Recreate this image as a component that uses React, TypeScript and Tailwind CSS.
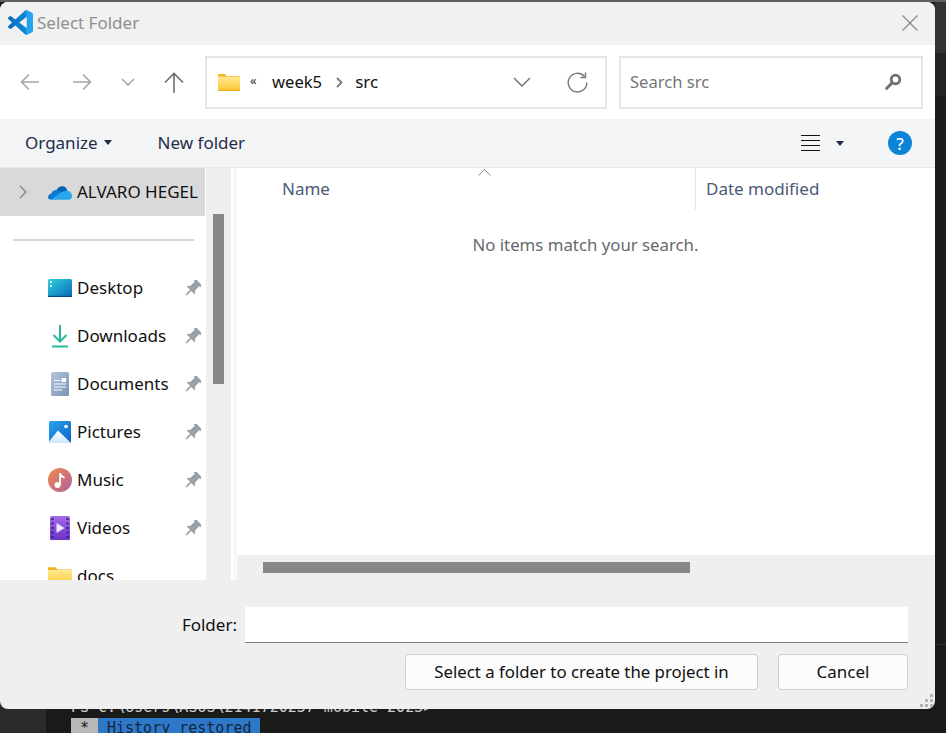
import type { ReactNode } from "react";

const pin = (
  <svg width="17" height="17" viewBox="0 0 16 16" fill="#98a1a9">
    <g transform="rotate(45 8 8)">
      <rect x="3.500" y="-0.500" width="9" height="2.400" rx="0.500" />
      <rect x="5" y="1.500" width="6" height="6.500" />
      <path d="M5 7.500h6l2.500 3h-11Z" />
      <rect x="7.200" y="10" width="1.600" height="6.500" />
    </g>
  </svg>
);

function FolderIcon({ w = 22, h = 18 }: { w?: number; h?: number }) {
  return (
    <svg width={w} height={h} viewBox="0 0 22 18">
      <defs>
        <linearGradient id="fold" x1="0" y1="0" x2="0" y2="1">
          <stop offset="0" stopColor="#ffe98f" />
          <stop offset="1" stopColor="#fcc93f" />
        </linearGradient>
      </defs>
      <path d="M0 2a1 1 0 0 1 1-1h6l2 2.500h-9Z" fill="#f5b51c" />
      <rect x="0" y="3" width="22" height="15" rx="1" fill="#f0ad14" />
      <rect x="0" y="3.500" width="22" height="13.200" fill="url(#fold)" />
    </svg>
  );
}

const CloudIcon = (
  <svg width="24" height="16" viewBox="0 0 24 16">
    <path d="M8.500 6.200C10 2.500 15 1 17.800 3.800 18.700 4.700 19.200 5.600 19.500 6.800L12 10.500Z" fill="#0364b8" />
    <path d="M9 6C6.500 5.500 3.800 7 3.500 9.500 1.300 10 0 11.500 0 13c0 1.700 1.300 2.800 3.500 2.800L14.500 8.500Z" fill="#0f78d4" />
    <path d="M19.500 6.800C22 7 24 9.500 24 12 24 14.500 22.500 15.800 20.500 15.800H3.500C9 12 13 6.800 19.500 6.800Z" fill="#28a8ea" />
  </svg>
);

const DesktopIcon = (
  <svg width="24" height="18" viewBox="0 0 24 18">
    <defs>
      <linearGradient id="desk" x1="0" y1="0" x2="1" y2="1">
        <stop offset="0" stopColor="#2fd3de" />
        <stop offset="1" stopColor="#0868b4" />
      </linearGradient>
    </defs>
    <rect width="24" height="18" rx="1.500" fill="url(#desk)" />
    <rect x="0" y="16.800" width="24" height="1.200" fill="#06508f" />
    <rect x="2" y="2" width="2" height="2" fill="#ffffff" />
    <rect x="2" y="6" width="2" height="2" fill="#d5f5f8" />
  </svg>
);

const DownloadIcon = (
  <svg width="24" height="24" viewBox="0 0 24 24" fill="none" stroke="#25b89a" strokeWidth="2">
    <path d="M12 1v17" />
    <path d="M5.500 11 12 17.500 18.500 11" />
    <path d="M4 22.500h16" />
  </svg>
);

const DocumentsIcon = (
  <svg width="24" height="24" viewBox="0 0 24 24">
    <defs>
      <linearGradient id="docs" x1="0" y1="0" x2="1" y2="1">
        <stop offset="0" stopColor="#b5c7de" />
        <stop offset="1" stopColor="#7891b3" />
      </linearGradient>
    </defs>
    <rect x="3" width="18" height="24" rx="1.500" fill="url(#docs)" />
    <path d="M6 8.500h6M6 12h12M6 15h12M6 18h8" stroke="#fff" strokeWidth="1" />
    <rect x="13.500" y="6" width="4.500" height="4" fill="#fff" />
  </svg>
);

const PicturesIcon = (
  <svg width="24" height="24" viewBox="0 0 24 24">
    <defs>
      <linearGradient id="pics" x1="0" y1="0" x2="1" y2="1">
        <stop offset="0" stopColor="#27a2ee" />
        <stop offset="1" stopColor="#0a64c4" />
      </linearGradient>
      <linearGradient id="snow" x1="0" y1="0" x2="0" y2="1">
        <stop offset="0" stopColor="#ffffff" />
        <stop offset="1" stopColor="#cfe6fb" />
      </linearGradient>
    </defs>
    <rect x="1" y="1" width="22" height="22" rx="1.500" fill="url(#pics)" />
    <path d="M1 23v-1.500L10 10.500 22.500 22.500 22 23Z" fill="url(#snow)" />
    <circle cx="18" cy="6.500" r="1.800" fill="#fff" />
  </svg>
);

const MusicIcon = (
  <svg width="24" height="24" viewBox="0 0 24 24">
    <defs>
      <linearGradient id="mus" x1="0" y1="0" x2="1" y2="1">
        <stop offset="0" stopColor="#f28a4a" />
        <stop offset="1" stopColor="#b0609f" />
      </linearGradient>
    </defs>
    <circle cx="12" cy="12" r="12" fill="url(#mus)" />
    <circle cx="9.500" cy="17" r="3" fill="#fff" />
    <path d="M11.200 17V5h1.800c.4 2 2 3 3.500 3.300V10.500C15 10.300 13.800 9.800 13 9v8Z" fill="#fff" />
  </svg>
);

const VideosIcon = (
  <svg width="22" height="24" viewBox="0 0 22 24">
    <defs>
      <linearGradient id="vid" x1="0" y1="0" x2="0" y2="1">
        <stop offset="0" stopColor="#a36be8" />
        <stop offset="1" stopColor="#6a34c8" />
      </linearGradient>
    </defs>
    <rect width="20" height="24" x="1" rx="1.500" fill="url(#vid)" />
    <path d="M2.500 2h2v2h-2ZM2.500 6.500h2v2h-2ZM2.500 11h2v2h-2ZM2.500 15.500h2v2h-2ZM2.500 20h2v2h-2ZM17.500 2h2v2h-2ZM17.500 6.500h2v2h-2ZM17.500 11h2v2h-2ZM17.500 15.500h2v2h-2ZM17.500 20h2v2h-2Z" fill="#3d1d86" />
    <path d="M7.500 7 15.500 12 7.500 17Z" fill="#f1e6ff" />
  </svg>
);

function NavItem({ icon, label, pinned = true }: { icon: ReactNode; label: string; pinned?: boolean }) {
  return (
    <div className="flex h-[48px] shrink-0 items-center pl-[48px] pr-[5px]">
      <span className="flex w-[24px] shrink-0 justify-center">{icon}</span>
      <span className="ml-[5px] text-[#101010]">{label}</span>
      {pinned && <span className="ml-auto">{pin}</span>}
    </div>
  );
}

export default function App() {
  return (
    <div className="flex h-[733px] w-[946px] overflow-hidden bg-[#1a1a1a] font-['Noto_Sans','Open_Sans',sans-serif] text-[17px]">
      <div className="flex h-[733px] w-[935px] shrink-0 flex-col overflow-hidden">
        <div className="h-[2px] shrink-0 bg-[#606060]" />
        <div className="relative z-10 flex h-[707px] shrink-0 flex-col overflow-hidden rounded-[8px] bg-[#efefef]">
          {/* title bar */}
          <div className="flex h-[43px] shrink-0 items-center bg-[#f1f1f1] pb-[2px] pl-[8px] pr-[17px]">
            <svg width="25" height="25" viewBox="0 0 24 24">
              <defs>
                <linearGradient id="vsc" x1="0" y1="0" x2="1" y2="0">
                  <stop offset="0" stopColor="#0a6fbd" />
                  <stop offset="0.7" stopColor="#0a86d8" />
                  <stop offset="0.72" stopColor="#1f9cf0" />
                  <stop offset="1" stopColor="#2aa6f2" />
                </linearGradient>
              </defs>
              <path
                fill="url(#vsc)"
                d="M23.150 2.587L18.210.210a1.494 1.494 0 0 0-1.705.290l-9.460 8.630-4.120-3.128a.999.999 0 0 0-1.276.057L.327 7.261A1 1 0 0 0 .326 8.740L3.899 12 .326 15.260a1 1 0 0 0 .001 1.479L1.650 17.940a.999.999 0 0 0 1.276.057l4.120-3.128 9.460 8.630a1.492 1.492 0 0 0 1.704.290l4.942-2.377A1.500 1.500 0 0 0 24 20.060V3.939a1.500 1.500 0 0 0-.850-1.352zm-5.146 14.861L10.826 12l7.178-5.448v10.896z"
              />
            </svg>
            <span className="ml-[4px] text-[#8f8f8f]">Select Folder</span>
            <svg className="ml-auto" width="16" height="16" viewBox="0 0 16 16" stroke="#8a8a8a" strokeWidth="1.300">
              <path d="M.5.500l15 15M15.500.500l-15 15" />
            </svg>
          </div>

          {/* navigation row */}
          <div className="flex h-[74px] shrink-0 items-center bg-white pl-[20px] pr-[12px]">
            <svg width="19" height="18" viewBox="0 0 19 18" fill="none" stroke="#a6a6a6" strokeWidth="1.600">
              <path d="M19 9H1.500M9 1.500 1.500 9 9 16.500" />
            </svg>
            <svg className="ml-[34px]" width="19" height="18" viewBox="0 0 19 18" fill="none" stroke="#a6a6a6" strokeWidth="1.600">
              <path d="M0 9h17.500M10 1.500 17.500 9 10 16.500" />
            </svg>
            <svg className="ml-[29px]" width="14" height="8" viewBox="0 0 14 8" fill="none" stroke="#a6a6a6" strokeWidth="1.600">
              <path d="M1 1l6 6 6-6" />
            </svg>
            <svg className="ml-[29px]" width="20" height="21" viewBox="0 0 20 21" fill="none" stroke="#6f6f6f" strokeWidth="1.600">
              <path d="M10 21V2M1 10.500 10 1.500l9 9" />
            </svg>
            <div className="ml-[21px] flex h-[53px] w-[402px] items-center border-2 border-[#e6e6e6] pl-[11px] pr-[17px] text-[#111]">
              <FolderIcon />
              <span className="ml-[10px] w-[22px] pb-[4px] text-[13px] leading-none text-[#333]">«</span>
              <span className="text-[16.6px]">week5</span>
              <svg className="ml-[14px]" width="7" height="11" viewBox="0 0 7 11" fill="none" stroke="#777" strokeWidth="1.800">
                <path d="M1 1l4.500 4.500L1 10" />
              </svg>
              <span className="ml-[12px]">src</span>
              <svg className="ml-auto" width="18" height="10" viewBox="0 0 18 10" fill="none" stroke="#6f6f6f" strokeWidth="1.400">
                <path d="M1 1l8 8 8-8" />
              </svg>
              <svg className="ml-[36px]" width="21" height="21" viewBox="0 0 21 21" fill="none" stroke="#777" strokeWidth="1.400">
                <path d="M17.500 4.500A9.300 9.300 0 1 0 19.800 10.500" />
                <path d="M18.500.500v5h-5" />
              </svg>
            </div>
            <div className="ml-[12px] flex h-[53px] w-[304px] items-center border-2 border-[#e6e6e6] pl-[9px] pr-[19px] text-[#777]">
              <span className="text-[16.6px]">Search src</span>
              <svg className="ml-auto" width="18" height="18" viewBox="0 0 18 18" fill="none" stroke="#6f6f6f">
                <circle cx="11.500" cy="6.500" r="4.300" strokeWidth="2.800" />
                <path d="M8 10 1.800 16.200" strokeWidth="3" />
              </svg>
            </div>
          </div>

          {/* toolbar */}
          <div className="flex h-[49px] shrink-0 items-center border-b border-[#e6e7e9] bg-[#f4f5f7] pl-[25px] pr-[23px] text-[#1f2c47]">
            <span>Organize</span>
            <svg className="mb-[2px] ml-[6px]" width="8" height="5" viewBox="0 0 8 5" fill="#1f2c47">
              <path d="M0 0h8L4 5Z" />
            </svg>
            <span className="ml-[46px]">New folder</span>
            <svg className="ml-auto" width="19" height="16" viewBox="0 0 19 16" stroke="#111" strokeWidth="1">
              <path d="M0 .500h19M0 5.500h19M0 10.500h19M0 15.500h19" />
            </svg>
            <svg className="ml-[16px]" width="8" height="5" viewBox="0 0 8 5" fill="#1f2c47">
              <path d="M0 0h8L4 5Z" />
            </svg>
            <div className="ml-[44px] flex h-[24px] w-[24px] items-center justify-center rounded-full bg-[#0a84d8] text-[17px] font-medium leading-none text-white">
              ?
            </div>
          </div>

          {/* sidebar and file list */}
          <div className="flex h-[412px] shrink-0 bg-white">
            <div className="flex w-[206px] shrink-0 flex-col overflow-hidden">
              <div className="mr-[1px] flex h-[48px] shrink-0 items-center bg-[#d9d9d9]">
                <svg className="ml-[19px]" width="8" height="14" viewBox="0 0 8 14" fill="none" stroke="#8a8a8a" strokeWidth="1.500">
                  <path d="M1 1l6 6-6 6" />
                </svg>
                <span className="ml-[21px]">{CloudIcon}</span>
                <span className="ml-[5px] whitespace-nowrap text-[#101010]">ALVARO HEGEL</span>
              </div>
              <div className="flex h-[48px] shrink-0 items-center pl-[13px] pr-[12px]">
                <div className="h-[2px] w-full bg-[#d6d6d6]" />
              </div>
              <NavItem icon={DesktopIcon} label="Desktop" />
              <NavItem icon={DownloadIcon} label="Downloads" />
              <NavItem icon={DocumentsIcon} label="Documents" />
              <NavItem icon={PicturesIcon} label="Pictures" />
              <NavItem icon={MusicIcon} label="Music" />
              <NavItem icon={VideosIcon} label="Videos" />
              <NavItem icon={<FolderIcon w={24} h={20} />} label="docs" pinned={false} />
            </div>
            <div className="w-[25px] shrink-0 bg-[#efefef] pl-[7px] pt-[46px]">
              <div className="h-[170px] w-[11px] bg-[#878787]" />
            </div>
            <div className="w-[3px] shrink-0 bg-white" />
            <div className="w-[2px] shrink-0 bg-[#f4f4f4]" />
            <div className="flex min-w-0 flex-1 flex-col">
              <div className="relative flex h-[42px] shrink-0 text-[#4a5a78]">
                <div className="flex w-[460px] items-center border-r border-[#e4e4e4] pl-[46px]">Name</div>
                <div className="flex items-center pl-[10px]">Date modified</div>
                <svg className="absolute left-[242px] top-[1px]" width="13" height="7" viewBox="0 0 13 7" fill="none" stroke="#8a8a8a">
                  <path d="M.5 6.500l6-6 6 6" />
                </svg>
              </div>
              <div className="flex-1 pt-[23px] text-center text-[16.8px] leading-[24px] text-[#666a6c]">No items match your search.</div>
              <div className="ml-[1px] h-[25px] shrink-0 bg-[#efefef] pl-[26px] pt-[7px]">
                <div className="h-[11px] w-[427px] bg-[#878787]" />
              </div>
            </div>
          </div>

          {/* folder field and buttons */}
          <div className="relative flex flex-1 flex-col items-end pr-[27px] pt-[27px] text-[#101010]">
            <div className="flex items-center">
              <span className="mr-[8px]">Folder:</span>
              <div className="h-[36px] w-[663px] border-b border-[#808080] bg-white" />
            </div>
            <div className="mt-[11px] flex gap-[20px]">
              <button className="h-[36px] w-[353px] rounded-[4px] border border-[#d0d0d0] bg-[#fcfcfc] text-[16.8px]">
                Select a folder to create the project in
              </button>
              <button className="h-[36px] w-[130px] rounded-[4px] border border-[#d0d0d0] bg-[#fcfcfc]">Cancel</button>
            </div>
            <svg className="absolute bottom-[1px] right-[1px]" width="14" height="14" viewBox="0 0 14 14" fill="#b4b4b4">
              <path d="M10 0h3v3h-3ZM5 5h3v3H5ZM10 5h3v3h-3ZM0 10h3v3H0ZM5 10h3v3H5ZM10 10h3v3h-3Z" />
            </svg>
          </div>
        </div>

        {/* terminal peeking out under the dialog */}
        <div className="-mt-[12px] flex min-h-0 flex-1 font-['DejaVu_Sans_Mono',monospace] text-[15px] leading-[21px]">
          <div className="w-[46px] shrink-0 bg-[#2b2b2b]" />
          <div className="pl-[25px]">
            <div className="h-[21px] whitespace-nowrap text-[#cccccc]">PS C:\Users\ASUS\2141720237-mobile-2023&gt;</div>
            <div className="flex h-[21px]">
              <span className="w-[27px] bg-[#b8b8b8] text-center text-[#222]">*</span>
              <span className="w-[162px] bg-[#2f78c8] pl-[9px] text-[#0f2740]">History restored</span>
            </div>
          </div>
        </div>
      </div>

      {/* editor edge to the right of the dialog */}
      <div className="flex w-[11px] shrink-0 flex-col">
        <div className="h-[2px] shrink-0 bg-[#606060]" />
        <div className="h-[51px] shrink-0 bg-[#333333]" />
        <div className="h-[43px] shrink-0 bg-[#232323]" />
        <div className="h-[549px] shrink-0 border-b border-[#333333] bg-[#1c1c1c]" />
        <div className="flex-1 bg-[#1a1a1a]" />
      </div>
    </div>
  );
}
